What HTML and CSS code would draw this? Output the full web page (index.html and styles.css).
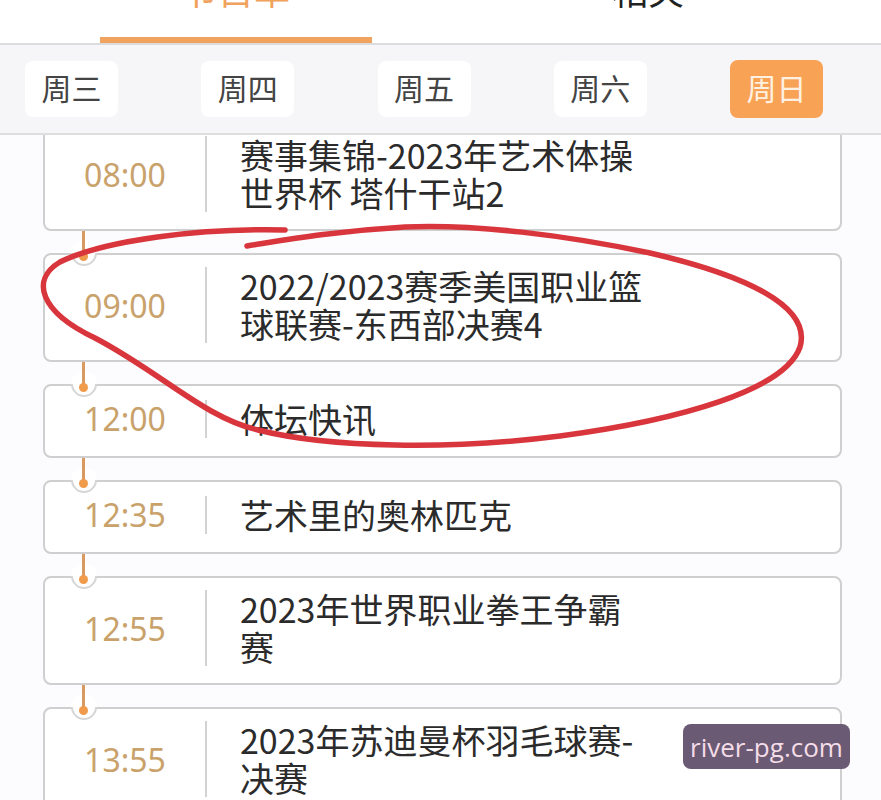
FILE: index.html
```html
<!DOCTYPE html>
<html>
<head>
    <title>节目单</title>
    <link rel="stylesheet" href="styles.css">
</head>
<body>
    <div class="tabs">
        <div class="tab active"><span>节目单</span></div>
        <div class="tab"><span>相关</span></div>
    </div>

    <div class="days">
        <div class="day">周三</div>
        <div class="day">周四</div>
        <div class="day">周五</div>
        <div class="day">周六</div>
        <div class="day active">周日</div>
    </div>

    <div class="list">
        <div class="item first">
            <div class="time">08:00</div>
            <div class="title">赛事集锦-2023年艺术体操<br>世界杯 塔什干站2</div>
        </div>
        <div class="item">
            <span class="link"></span>
            <div class="time">09:00</div>
            <div class="title">2022/2023赛季美国职业篮<br>球联赛-东西部决赛4</div>
        </div>
        <div class="item">
            <span class="link"></span>
            <div class="time">12:00</div>
            <div class="title">体坛快讯</div>
        </div>
        <div class="item">
            <span class="link"></span>
            <div class="time">12:35</div>
            <div class="title">艺术里的奥林匹克</div>
        </div>
        <div class="item">
            <span class="link"></span>
            <div class="time">12:55</div>
            <div class="title">2023年世界职业拳王争霸<br>赛</div>
        </div>
        <div class="item">
            <span class="link"></span>
            <div class="time">13:55</div>
            <div class="title">2023年苏迪曼杯羽毛球赛-<br>决赛</div>
        </div>
    </div>

    <!-- 手绘的红圈 -->
    <svg class="scribble" width="881" height="800" viewBox="0 0 881 800">
        <path d="M285 230 C200 228 105 240 60 262 C30 280 40 312 95 338 C160 372 205 418 258 430 C330 448 450 450 560 436 C680 420 785 390 800 347 C812 306 745 275 650 253 C565 235 475 224 405 227 C335 231 285 240 247 246"
              fill="none" stroke="#d8363c" stroke-width="5.5" stroke-linecap="round"/>
    </svg>

    <div class="watermark">river-pg.com</div>
</body>
</html>
```

FILE: styles.css
```css
/* Gaya utama */
body {
    margin: 0;
    font-family: "Noto Sans CJK SC", "Noto Sans", sans-serif;
    background-color: #fcfbfd;
    height: 800px;
    overflow: hidden;
    position: relative;
}

/* Tab atas (terpotong) */
.tabs {
    display: flex;
    height: 43px;
    padding-left: 100px;
    gap: 140px;
    overflow: hidden;
    background-color: #fff;
    border-bottom: 2px solid #dcdcdc;
}

.tab {
    width: 272px;
    position: relative;
    text-align: center;
    font-size: 36px;
    line-height: 36px;
    color: #222;
}

.tab span {
    display: block;
    margin-top: -29px;
}

.tab.active {
    color: #f0a25c;
}

.tab.active::after {
    content: "";
    position: absolute;
    left: 0;
    right: 0;
    bottom: 0;
    height: 6px;
    background-color: #f0a35e;
}

/* Baris hari */
.days {
    display: flex;
    justify-content: space-between;
    align-items: center;
    height: 88px;
    padding: 0 58px 0 25px;
    background-color: #f6f5f7;
    border-bottom: 2px solid #dedede;
}

.day {
    width: 93px;
    height: 52px;
    padding-bottom: 4px;
    display: flex;
    justify-content: center;
    align-items: center;
    background-color: #fff;
    border-radius: 8px;
    font-size: 30px;
    color: #444;
}

.day.active {
    height: 54px;
    background-color: #f7a255;
    color: #fff1e2;
}

/* Daftar acara */
.list {
    overflow: hidden;
    padding-left: 43px;
    width: 799px;
}

.item {
    position: relative;
    display: flex;
    align-items: center;
    padding: 12px 0 17px;
    margin-bottom: 22px;
    background-color: #fff;
    border: 2px solid #cfcfcf;
    border-radius: 8px;
}

.item.first {
    margin-top: -13px;
}

/* lekukan kecil di atas kartu */
.item::before {
    content: "";
    position: absolute;
    left: 26px;
    top: -15px;
    width: 22px;
    height: 22px;
    border-radius: 50%;
    background-color: #fff;
    border: 2px solid #d6d6d6;
    border-top-color: transparent;
    border-left-color: transparent;
    transform: rotate(45deg);
}

.item.first::before {
    display: none;
}

.link {
    position: absolute;
    left: 37px;
    top: -24px;
    width: 3px;
    height: 26px;
    background-color: #d99a62;
}

.link::after {
    content: "";
    position: absolute;
    left: -3px;
    bottom: -4px;
    width: 9px;
    height: 9px;
    border-radius: 50%;
    background-color: #f09a4c;
}

.time {
    width: 160px;
    flex-shrink: 0;
    text-align: center;
    font-family: "Noto Sans", "Open Sans", sans-serif;
    font-size: 32px;
    line-height: 41px;
    color: #c9a26b;
}

.title {
    padding-left: 33px;
    border-left: 2px solid #d2d2d2;
    font-size: 34px;
    line-height: 38px;
    color: #2b2b2b;
    white-space: nowrap;
}

/* Coretan merah dan watermark */
.scribble {
    position: absolute;
    left: 0;
    top: 0;
    pointer-events: none;
}

.watermark {
    position: absolute;
    left: 683px;
    top: 724px;
    width: 167px;
    height: 45px;
    display: flex;
    justify-content: center;
    align-items: center;
    background-color: #6b5a73;
    border-radius: 8px;
    font-family: "Open Sans", sans-serif;
    font-size: 26px;
    color: #f4dde8;
}
```
